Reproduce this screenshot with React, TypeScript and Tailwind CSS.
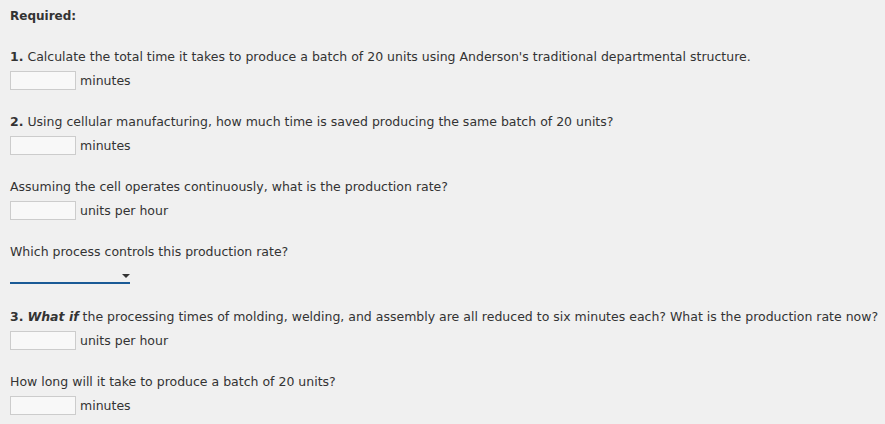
import React from "react";

function Answer({ unit }: { unit: string }) {
  return (
    <div className="flex items-center gap-[4px] mt-[5px]">
      <input
        type="text"
        className="w-[66px] h-[19px] bg-[#f8f8f8] border border-[#cccccc] outline-none"
      />
      <span>{unit}</span>
    </div>
  );
}

export default function App() {
  return (
    <div className="w-[885px] h-[424px] bg-[#f0f0f0] text-[#333333] text-[12.5px] leading-[18px] px-[10px] pt-[7px] font-['DejaVu_Sans',sans-serif] whitespace-nowrap">
      <p className="font-bold text-[12px]">Required:</p>

      <div className="mt-[23px]">
        <p>
          <b>1.</b> Calculate the total time it takes to produce a batch of 20 units using Anderson's traditional departmental structure.
        </p>
        <Answer unit="minutes" />
      </div>

      <div className="mt-[23px]">
        <p>
          <b>2.</b> Using cellular manufacturing, how much time is saved producing the same batch of 20 units?
        </p>
        <Answer unit="minutes" />
      </div>

      <div className="mt-[23px]">
        <p>Assuming the cell operates continuously, what is the production rate?</p>
        <Answer unit="units per hour" />
      </div>

      <div className="mt-[23px]">
        <p>Which process controls this production rate?</p>
        <div className="mt-[5px] w-[120px] h-[18px] border-b-2 border-[#1a5a96] flex items-start justify-end pt-[8px] pr-[0px]">
          <svg width="8" height="4" viewBox="0 0 8 4">
            <path d="M0 0 H8 L4 4 Z" fill="#333333" />
          </svg>
        </div>
      </div>

      <div className="mt-[24px]">
        <p>
          <b>3.</b>{" "}
          <b>
            <i>What if</i>
          </b>{" "}
          the processing times of molding, welding, and assembly are all reduced to six minutes each? What is the production rate now?
        </p>
        <Answer unit="units per hour" />
      </div>

      <div className="mt-[23px]">
        <p>How long will it take to produce a batch of 20 units?</p>
        <Answer unit="minutes" />
      </div>
    </div>
  );
}
